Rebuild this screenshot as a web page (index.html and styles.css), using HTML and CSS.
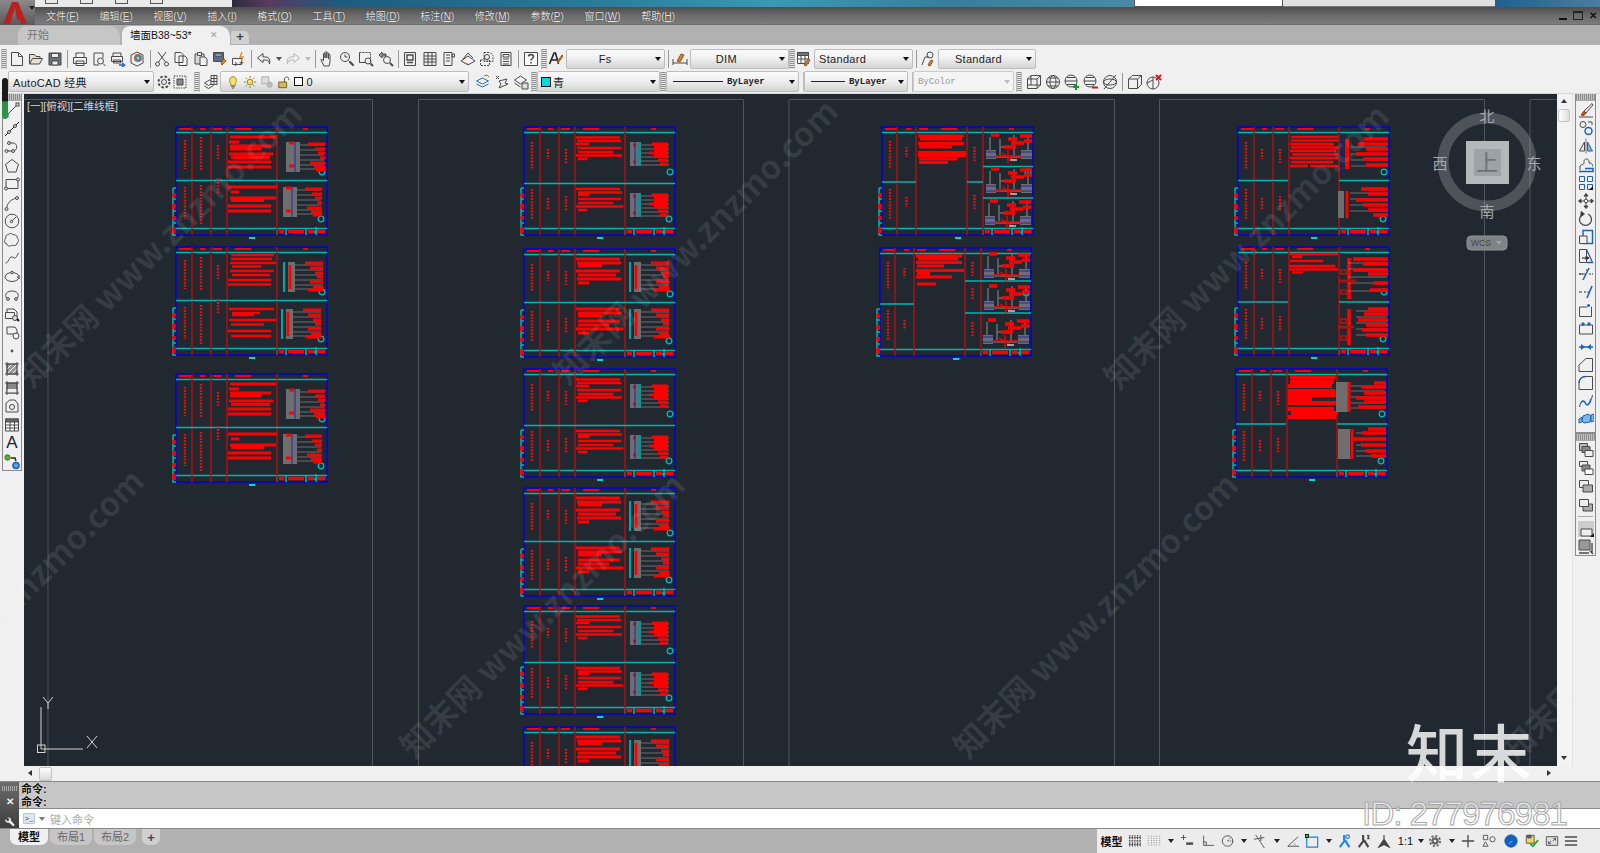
FILE: index.html
```html
<!DOCTYPE html>
<html lang="zh-CN">
<head>
<meta charset="utf-8">
<title>AutoCAD 经典</title>
<link rel="stylesheet" href="styles.css">
</head>
<body>
<svg class="defs" width="0" height="0">
<defs>
<symbol id="i-new" viewBox="0 0 16 16"><path d="M2.5 1.5h7l4 4v9h-11zM9.5 1.5v4h4"/></symbol>
<symbol id="i-open" viewBox="0 0 16 16"><path d="M1.5 13V3.5h5l1.5 2h4v2M1.5 13l3-5.5h10l-3 5.5z" fill="#e6e2d2"/></symbol>
<symbol id="i-save" viewBox="0 0 16 16"><path d="M2 2h12v12H2z" fill="#6d7178"/><path d="M4.500 2.500h7v4h-7zM5 10h6v4H5z" fill="#eee"/></symbol>
<symbol id="i-print" viewBox="0 0 16 16"><path d="M4 6V2h8v4M1.500 6.500h13v6h-13zM4 10h8v4.500H4z" fill="#f4f4f4"/></symbol>
<symbol id="i-prev" viewBox="0 0 16 16"><path d="M3 14V2h9v5M3 14h5"/><circle cx="9.500" cy="10" r="3"/><path d="M12 12.500l2.500 2.500"/></symbol>
<symbol id="i-pub" viewBox="0 0 16 16"><path d="M3 5V2h8v3M1.500 5.500h11v5h-11zM3.500 9h7v3h-7z"/><path d="M9 14h4M12 12l2.500 2-2.500 2" stroke="#1c62b8" stroke-width="1.600"/></symbol>
<symbol id="i-3d" viewBox="0 0 16 16"><path d="M8 1l6 3v8l-6 3-6-3V4z"/><circle cx="9" cy="7" r="3.800" fill="#2c7fd0" stroke="#d67a18"/><circle cx="9" cy="7" r="1.500" fill="#e8c24a" stroke="none"/></symbol>
<symbol id="i-cut" viewBox="0 0 16 16"><path d="M4 1l7.500 10M12 1L4.500 11"/><circle cx="3.500" cy="13" r="2"/><circle cx="12.500" cy="13" r="2"/></symbol>
<symbol id="i-copy" viewBox="0 0 16 16"><path d="M2 1.500h6l2 2v8H2zM6 5h6l2 2v7.500H6z" fill="#f4f4f4"/></symbol>
<symbol id="i-paste" viewBox="0 0 16 16"><path d="M2 3h9v10H2z" fill="#d9d9d9"/><path d="M4.500 1.500h4v3h-4zM7 6h5l2 2v6.500H7z" fill="#f4f4f4"/></symbol>
<symbol id="i-match" viewBox="0 0 16 16"><path d="M1.500 1.500h10v9h-10z" fill="#5b6b88"/><path d="M3 3h7v2H3z" fill="#ddd"/><path d="M9 12l3-4 2 2-4 4z" fill="#e2902a" stroke="#9c5a12"/></symbol>
<symbol id="i-blk" viewBox="0 0 16 16"><path d="M1.500 7.500h9v6h-9zM4 14.500a1.500 1.500 0 0 0 0-3M9 11a1.500 1.500 0 0 0 3 0"/><path d="M11 1l-2 5h3l-1.500 4" stroke="#e2902a" stroke-width="1.400"/></symbol>
<symbol id="i-undo" viewBox="0 0 16 16"><path d="M7 2.500L1.500 7 7 11.500V9h3c2 0 3 1 3.500 4 1-4-.5-7-3.500-7H7z"/></symbol>
<symbol id="i-redo" viewBox="0 0 16 16"><path d="M9 2.500L14.500 7 9 11.500V9H6c-2 0-3 1-3.500 4-1-4 .5-7 3.500-7h3z" stroke="#b9b9b9"/></symbol>
<symbol id="i-pan" viewBox="0 0 16 16"><path d="M4 15l-3-6c0-1.500 1.500-1 2.500 1V3c0-1.200 1.500-1.200 1.500 0v4-5.500c0-1.200 1.800-1.200 1.800 0V7V2.500c0-1.200 1.700-1.200 1.700 0V8V4c0-1.200 1.500-1.200 1.500 0v7l-1 4z"/></symbol>
<symbol id="i-zr" viewBox="0 0 16 16"><circle cx="6" cy="6" r="4.500"/><path d="M6 3.500V6h2.500M9.500 9.500l5 5" /><path d="M10.500 10.500l4 4" stroke-width="2.200"/></symbol>
<symbol id="i-zw" viewBox="0 0 16 16"><path d="M1.500 1.500h11v9" stroke-dasharray="2 1"/><path d="M1.500 1.500v10h6"/><circle cx="10" cy="10" r="3"/><path d="M12.500 12.500l2.500 2.500" stroke-width="2"/></symbol>
<symbol id="i-zp" viewBox="0 0 16 16"><path d="M1 4l3-3v2h4v2H4v2z" fill="#999"/><circle cx="9" cy="9" r="3.500"/><path d="M12 12l3 3" stroke-width="2"/></symbol>
<symbol id="i-prop" viewBox="0 0 16 16"><path d="M2.500 1.500h11v13h-11z"/><path d="M5 4h6v5H5zM5 11.500h6" stroke-width="1.400"/></symbol>
<symbol id="i-dc" viewBox="0 0 16 16"><path d="M2 1.500h12v13H2zM6 1.500v13M10 1.500v13M2 5h12M2 8h12M2 11h12"/></symbol>
<symbol id="i-pal" viewBox="0 0 16 16"><path d="M3 1.500h8v13H3zM11 3h2.500v3H11zM5 4h4M5 7h4M5 10h4"/></symbol>
<symbol id="i-sheet" viewBox="0 0 16 16"><path d="M1 10l7-5 7 5-7 4zM3 8l5-6 5 5"/><path d="M3 11l5 2" stroke="#c08a2a"/></symbol>
<symbol id="i-mark" viewBox="0 0 16 16"><path d="M5 1.500h6l3 3v6H5zM1.500 9h9v5.500h-9z" stroke-dasharray="2 1"/><circle cx="8" cy="6" r="2.500"/></symbol>
<symbol id="i-calc" viewBox="0 0 16 16"><path d="M3 1.500h10v13H3zM5 3.500h6V6H5zM5 8h6M5 10.500h6M5 13h6"/></symbol>
<symbol id="i-help" viewBox="0 0 16 16"><path d="M1.500 1.500h13v13h-13z" fill="#f8f8f8"/><path d="M5.500 5.500C5.500 3 10.500 3 10.500 5.500 10.500 7.500 8 7.500 8 9.500M8 11v1.500" stroke-width="1.600"/></symbol>
<symbol id="i-tstyle" viewBox="0 0 16 16"><path d="M1.500 13L6 2h1.500l3 11M3.500 9h5" stroke="#222" stroke-width="1.600"/><path d="M9 11l5-7 1 1-5 7z" fill="#d9822a" stroke="#8c5a20"/></symbol>
<symbol id="i-dstyle" viewBox="0 0 16 16"><path d="M1 14V8M15 14V8M1 12h14"/><path d="M5 10l4-7 3 1-4 7z" fill="#d9822a" stroke="#8c5a20"/></symbol>
<symbol id="i-tbstyle" viewBox="0 0 16 16"><path d="M1.500 1.500h11v11h-11z" fill="#fff"/><path d="M1.500 1.500h11v3h-11z" fill="#6d7178"/><path d="M1.500 8h11M5 4v8M9 4v8"/><path d="M8 14l4-6 2 1-4 6z" fill="#d9822a" stroke="#8c5a20"/></symbol>
<symbol id="i-mstyle" viewBox="0 0 16 16"><path d="M2 14l3-8h4"/><circle cx="10" cy="4" r="3"/><path d="M8 14l3-5 2 1-3 5z" fill="#d9822a" stroke="#8c5a20"/></symbol>
<symbol id="i-gear" viewBox="0 0 16 16"><circle cx="8" cy="8" r="2.500"/><circle cx="8" cy="8" r="5.500" stroke-dasharray="2.500 1.800" stroke-width="2"/></symbol>
<symbol id="i-wsp" viewBox="0 0 16 16"><path d="M2 2h12v12H2z" stroke-dasharray="1.500 1"/><path d="M5 5h6v6H5z" fill="#888"/></symbol>
<symbol id="i-layer" viewBox="0 0 16 16"><path d="M1.500 9l5-3 4 2.500-5 3zM1.500 12l4 2.500 5-3" /><path d="M8 1.500h6v9H8z" fill="#f4f4f4"/><path d="M8 4.500h6M8 7.500h6M11 1.500v9"/></symbol>
<symbol id="i-bulb" viewBox="0 0 16 16"><path d="M5.500 10C3 7 4 2 8 2s5 5 2.500 8v2h-5z" fill="#f4e46a" stroke="#8a7a20"/><path d="M6 13.500h4M7 15h2"/></symbol>
<symbol id="i-sun" viewBox="0 0 16 16"><circle cx="8" cy="8" r="3.200" fill="#f4e46a" stroke="#8a7a20"/><path d="M8 1v2.500M8 12.500V15M1 8h2.500M12.500 8H15M3 3l1.800 1.800M11.200 11.200L13 13M13 3l-1.800 1.800M4.800 11.200L3 13" stroke="#8a7a20"/></symbol>
<symbol id="i-frz" viewBox="0 0 16 16"><path d="M2 2h8v8H2z" fill="#ddd" stroke="#aaa"/><circle cx="11" cy="11" r="3" fill="#bbb" stroke="#aaa"/></symbol>
<symbol id="i-lock" viewBox="0 0 16 16"><path d="M2 8h9v6.500H2z" fill="#d9b650" stroke="#6a5a20"/><path d="M8.500 8V4.500c0-3 5-3 5 0V6"/></symbol>
<symbol id="i-lstate" viewBox="0 0 16 16"><path d="M1.500 7l6-3 6 3-6 3zM1.500 10l6 3 6-3" stroke="#2b6fb8"/><path d="M9 2l3-1 2 2" stroke="#8a7a20"/></symbol>
<symbol id="i-lwalk" viewBox="0 0 16 16"><path d="M2 2l3 3M2 5l3-3"/><path d="M5 7l8-2-2 4 3 1-9 4 2-4z"/></symbol>
<symbol id="i-lmatch" viewBox="0 0 16 16"><path d="M1.500 6l6-4 6 4-6 4z"/><path d="M1.500 9l6 4M9 9h6v6H9z" fill="#ddd"/></symbol>
<symbol id="i-box" viewBox="0 0 16 16"><path d="M1.500 5L5 1.500h9.500v9.500L11 14.500H1.500zM1.500 5H11v9.500M11 5l3.500-3.500M5 1.500V11H1.500M5 11h9.500"/></symbol>
<symbol id="i-sph" viewBox="0 0 16 16"><circle cx="8" cy="8" r="6.500"/><path d="M1.500 8h13M3 4h10M3 12h10"/><ellipse cx="8" cy="8" rx="3" ry="6.500"/></symbol>
<symbol id="i-sphp" viewBox="0 0 16 16"><circle cx="7" cy="7" r="6"/><path d="M1 7h12M3 3.500h8M3 10.500h8"/><path d="M12 10v6M9 13h6" stroke="#17962a" stroke-width="2"/></symbol>
<symbol id="i-sphm" viewBox="0 0 16 16"><circle cx="7" cy="7" r="6"/><path d="M1 7h12M3 3.500h8M3 10.500h8"/><path d="M9 13.500h6" stroke="#c01f1f" stroke-width="2"/></symbol>
<symbol id="i-sphn" viewBox="0 0 16 16"><circle cx="8" cy="8" r="6.500"/><ellipse cx="8" cy="8" rx="6.500" ry="3"/><path d="M2 15L14 1"/></symbol>
<symbol id="i-cube" viewBox="0 0 16 16"><path d="M1.500 5l4-3.500h9v9l-4 4h-9zM1.500 5h9v9.500M10.500 5l4-3.500"/></symbol>
<symbol id="i-cubex" viewBox="0 0 16 16"><circle cx="7" cy="9" r="6"/><path d="M7 3v12M1 9l6-3"/><path d="M10 1l5 5M15 1l-5 5" stroke="#d01818" stroke-width="1.800"/></symbol>
<symbol id="i-line" viewBox="0 0 16 16"><path d="M2.500 13.500l11-11"/><rect x="1" y="12" width="3" height="3" fill="#ddd"/><rect x="12" y="1" width="3" height="3" fill="#ddd"/></symbol>
<symbol id="i-xline" viewBox="0 0 16 16"><path d="M1 15L15 1" stroke="#222"/><circle cx="5" cy="11" r="1.500" fill="#ddd"/><circle cx="11" cy="5" r="1.500" fill="#ddd"/></symbol>
<symbol id="i-pline" viewBox="0 0 16 16"><path d="M3 12h6c5 0 5-8 0-8H5"/><circle cx="2.500" cy="12" r="1.500" fill="#ddd"/><circle cx="9" cy="12" r="1.500" fill="#ddd"/><circle cx="5" cy="4" r="1.500" fill="#ddd"/></symbol>
<symbol id="i-poly" viewBox="0 0 16 16"><path d="M8 1.500l6.500 5-2.500 7.500H4L1.500 6.500z"/></symbol>
<symbol id="i-rect" viewBox="0 0 16 16"><path d="M2 3.500h12v9H2z"/><circle cx="2" cy="12.500" r="1.500" fill="#ddd"/><circle cx="14" cy="3.500" r="1.500" fill="#ddd"/></symbol>
<symbol id="i-arc" viewBox="0 0 16 16"><path d="M2.500 14C3 8 7 4 13 3"/><circle cx="2.500" cy="14" r="1.500" fill="#ddd"/><circle cx="13" cy="3" r="1.500" fill="#ddd"/></symbol>
<symbol id="i-circ" viewBox="0 0 16 16"><circle cx="8" cy="8" r="6.800"/><path d="M7.500 8.500L12 4"/><circle cx="7.500" cy="8.500" r="1.200" fill="#ddd"/></symbol>
<symbol id="i-cloud" viewBox="0 0 16 16"><path d="M4 3c1-2 4-2 5 0 2-1 5 1 4 3 2 1 2 4 0 5 0 3-4 3-5 2-2 2-5 1-5-1-3 0-3-5-1-6-1-2 1-4 2-3z"/></symbol>
<symbol id="i-spl" viewBox="0 0 16 16"><path d="M1.500 13C5 13 5 6 8 7s3 3 6.500-4"/></symbol>
<symbol id="i-ell" viewBox="0 0 16 16"><ellipse cx="8" cy="8" rx="7" ry="4.500"/><circle cx="8" cy="3.500" r="1.300" fill="#ddd"/><circle cx="15" cy="8" r="1.300" fill="#ddd"/></symbol>
<symbol id="i-earc" viewBox="0 0 16 16"><path d="M4 12C0 10 1 4 8 4s8 6 4 8"/><circle cx="4" cy="12" r="1.400" fill="#ddd"/><circle cx="12" cy="12" r="1.400" fill="#ddd"/></symbol>
<symbol id="i-ins" viewBox="0 0 16 16"><path d="M3 11V3h7l3 3v5"/><path d="M1.500 6.500h9v6h-9z" fill="#eee"/><circle cx="11" cy="12" r="2.500" fill="#ddd"/><path d="M13 13l2 2" stroke="#111" stroke-width="2"/></symbol>
<symbol id="i-block" viewBox="0 0 16 16"><path d="M3 3h8l2 3v4H3z"/><circle cx="12" cy="12" r="3" fill="#f0f0f0"/></symbol>
<symbol id="i-pt" viewBox="0 0 16 16"><circle cx="8" cy="8" r="1.400" fill="#555" stroke="none"/></symbol>
<symbol id="i-hatch" viewBox="0 0 16 16"><path d="M3 3h10v10H3z" fill="#999"/><path d="M3 8l5-5M3 13L13 3M8 13l5-5" stroke="#eee"/><path d="M1 3h14M3 1v14M1 13h14M13 1v14"/></symbol>
<symbol id="i-grad" viewBox="0 0 16 16"><path d="M3 3h10v10H3z" fill="#888"/><path d="M3 9h10v4H3z" fill="#eee" stroke="none"/><path d="M1 3h14M3 1v14M1 13h14M13 1v14"/></symbol>
<symbol id="i-reg" viewBox="0 0 16 16"><path d="M2 5l4-3h5l3 4v8H2z"/><circle cx="8" cy="9" r="2.500"/></symbol>
<symbol id="i-tbl" viewBox="0 0 16 16"><path d="M1.500 2h13v12h-13z" fill="#fff"/><path d="M1.500 2h13v3h-13z" fill="#666"/><path d="M1.500 8h13M1.500 11h13M6 5v9M10.500 5v9"/></symbol>
<symbol id="i-addsel" viewBox="0 0 16 16"><circle cx="3.500" cy="3.500" r="2.700" fill="#64a83c" stroke="#3e7a20"/><path d="M7 4h4l1 3" stroke="#222" stroke-width="1.400"/><circle cx="12" cy="11.500" r="3" fill="#5aa4e0" stroke="#1c62b8" stroke-width="1.600"/></symbol>
<symbol id="i-erase" viewBox="0 0 16 16"><path d="M14 1.500L6 9l2 2 7-8z" fill="#e8e8e8"/><path d="M6 9l-3 4 3 .5 2-2.500z" fill="#c8541c" stroke="#8c3a14"/><path d="M1 15h14"/></symbol>
<symbol id="i-cpy" viewBox="0 0 16 16"><circle cx="5" cy="4.500" r="3"/><circle cx="10.500" cy="11" r="3.500" stroke="#1c62b8" stroke-width="1.500"/><path d="M10 2h4v3" /></symbol>
<symbol id="i-mir" viewBox="0 0 16 16"><path d="M8 .5v15" stroke="#777"/><path d="M6.500 4v9h-5z"/><path d="M9.500 4v9h5z" fill="#7db6e8" stroke="#1c62b8"/></symbol>
<symbol id="i-off" viewBox="0 0 16 16"><path d="M2 13V10c0-1.500 1-2.500 2.500-2.500S6 6 6 4.500C6 3 7 2 8.500 2s2.500 1 2.500 2.500v1.500c2 0 3.500 1 3.500 2.500v1" /><path d="M1 14.500h14v-3H7" stroke="#1c62b8" stroke-width="1.500"/></symbol>
<symbol id="i-arr" viewBox="0 0 16 16"><path d="M1.500 1.500h5v5h-5zM1.500 9.500h5v5h-5z" stroke="#1c62b8"/><path d="M9.500 1.500h5v5h-5zM9.500 9.500h5v5h-5z" stroke="#1c62b8"/><path d="M11 15l4-4v4z" fill="#111" stroke="none"/></symbol>
<symbol id="i-mov" viewBox="0 0 16 16"><path d="M8 1v14M1 8h14"/><path d="M6 3l2-2.500L10 3zM6 13l2 2.500 2-2.500zM3 6L.5 8 3 10zM13 6l2.500 2L13 10z" fill="#333"/><circle cx="8" cy="8" r="1.800" fill="#fff"/></symbol>
<symbol id="i-rot" viewBox="0 0 16 16"><path d="M10 3a6 6 0 1 1-5 0" stroke-width="1.300"/><path d="M3 .5l3.500 2.500L3 5.500z" fill="#333"/></symbol>
<symbol id="i-scl" viewBox="0 0 16 16"><path d="M5 1.500h9.500v13H5z" stroke="#1c62b8" stroke-width="1.400"/><path d="M1.500 7h7.500v7.500H1.500z" fill="#f0f0f0"/></symbol>
<symbol id="i-str" viewBox="0 0 16 16"><path d="M1.500 1.500h7v13h-7z"/><path d="M8.500 1.500l6 13h-6" stroke="#1c62b8" stroke-width="1.300"/><path d="M4 10h6" stroke="#111"/><path d="M8 8l3 2-3 2z" fill="#111"/></symbol>
<symbol id="i-trim" viewBox="0 0 16 16"><path d="M1 8h4M8 4h1M11 8h4" stroke="#333" stroke-dasharray="2 1"/><path d="M11 2L5 14" stroke="#1c62b8" stroke-width="1.600"/><path d="M1 8h6"/></symbol>
<symbol id="i-ext" viewBox="0 0 16 16"><path d="M1 8h3M6 8h2M9.500 8H12" stroke="#333"/><path d="M14 2L9 14" stroke="#1c62b8" stroke-width="1.600"/></symbol>
<symbol id="i-brk" viewBox="0 0 16 16"><path d="M1.500 14.500V5h12v9.500H1.500z"/><path d="M9 5h4" stroke="#f0f0f0" stroke-width="2"/><circle cx="10.500" cy="3.500" r="1.500" fill="#1c62b8" stroke="none"/></symbol>
<symbol id="i-brkp" viewBox="0 0 16 16"><path d="M1.500 5h13v9h-13z"/><circle cx="5" cy="4" r="1.700" fill="#1c62b8" stroke="none"/><circle cx="11" cy="4" r="1.700" fill="#1c62b8" stroke="none"/></symbol>
<symbol id="i-join" viewBox="0 0 16 16"><path d="M1 8h14" stroke="#1c62b8" stroke-width="1.500"/><path d="M3 5l4 3-4 3zM13 5L9 8l4 3z" fill="#1c62b8" stroke="none"/></symbol>
<symbol id="i-chm" viewBox="0 0 16 16"><path d="M1 8L8 1.500h6.500v13H1z"/></symbol>
<symbol id="i-fil" viewBox="0 0 16 16"><path d="M1 14.500V8c0-4 3-6.500 7-6.500h6.500v13z"/><path d="M1 8c0-4 3-6.500 7-6.500" stroke="#1c62b8" stroke-width="1.500"/></symbol>
<symbol id="i-bld" viewBox="0 0 16 16"><path d="M1.500 14l1-4M14.500 2l-1 4"/><path d="M3 10c2-4 4-1 5 1s4 0 5-5" stroke="#1c62b8" stroke-width="1.600"/></symbol>
<symbol id="i-exp" viewBox="0 0 16 16"><path d="M5 5l5-2 3 2-1 6-6 1-2-2z" fill="#7db6e8" stroke="#1c62b8"/><path d="M1 8l3-2v5l-3 1zM13 4l3-1v7l-3 1z" fill="#7db6e8" stroke="#1c62b8"/></symbol>
<symbol id="i-do1" viewBox="0 0 16 16"><path d="M1.500 1.500h8v7h-8z" fill="#bbb"/><path d="M4 4.500h8v6H4z" fill="#888"/><path d="M7 8.500h8v6H7z" fill="#eee"/></symbol>
<symbol id="i-do2" viewBox="0 0 16 16"><path d="M1.500 1.500h8v5h-8z" fill="#eee"/><path d="M4 5h8v6H4z" fill="#888"/><path d="M7 9h8v5.500H7z" fill="#fff"/></symbol>
<symbol id="i-do3" viewBox="0 0 16 16"><path d="M1.500 2.500h9v7h-9z" fill="#eee"/><path d="M5 7h9.500v7H5z" fill="#aaa"/></symbol>
<symbol id="i-do4" viewBox="0 0 16 16"><path d="M5 7h9.500v7H5z" fill="#aaa"/><path d="M1.500 2.500h9v7h-9z" fill="#eee"/></symbol>
<symbol id="i-txtf" viewBox="0 0 16 16"><path d="M0 0h16v16H0z" fill="#ccc" stroke="none"/><path d="M3 8h11v7H3z" fill="#eee"/><path d="M12 16l4-4v4z" fill="#111" stroke="none"/></symbol>
<symbol id="i-dimf" viewBox="0 0 16 16"><path d="M1 1h11v10H1z" fill="#999"/><path d="M1 14h10M14 4v10M12 12l3 3" stroke-width="1.400"/></symbol>
<symbol id="i-grid" viewBox="0 0 16 16"><path d="M2 1v14M5 1v14M8 1v14M11 1v14M14 1v14M1 4h14M1 8h14M1 12h14" stroke-width="1.200" stroke-dasharray="2 .8"/></symbol>
<symbol id="i-snap" viewBox="0 0 16 16"><path d="M1.500 2v12M5 2v12M8 2v12M11 2v12M14.500 2v12" stroke-dasharray="1 1.500" stroke="#777"/></symbol>
<symbol id="i-dyn" viewBox="0 0 16 16"><path d="M4 1v6M1 4h6"/><path d="M7 11h8" stroke-width="2.800"/></symbol>
<symbol id="i-ort" viewBox="0 0 16 16"><path d="M3 2v11h12M3 9h3v4"/></symbol>
<symbol id="i-pol" viewBox="0 0 16 16"><circle cx="7.500" cy="8" r="6"/><path d="M7.500 8H14M7.500 8l3.500-4" stroke-dasharray="1.500 1"/></symbol>
<symbol id="i-iso" viewBox="0 0 16 16"><path d="M3 1l10 15M9 1v7M1 6l12-2" /></symbol>
<symbol id="i-ang" viewBox="0 0 16 16"><path d="M14 3L2 14h13"/><path d="M9 10.500c1 .5 1.500 2 1.500 3.500" stroke-dasharray="1 1"/></symbol>
<symbol id="i-osnap" viewBox="0 0 16 16"><path d="M2 3.500h12.500V15H2z" stroke="#1c7fe0" stroke-width="1.300"/><rect x="0" y="0" width="4.500" height="4.500" fill="#111" stroke="none"/><rect x="1" y="1" width="2.500" height="2.500" fill="#24d024" stroke="none"/></symbol>
<symbol id="i-an1" viewBox="0 0 16 16"><path d="M8 7L2 15M8 7l5 8M7 1v6" stroke="#1a86f0" stroke-width="2.400"/><circle cx="11" cy="3" r="2" stroke="#1a86f0" stroke-width="1.400"/></symbol>
<symbol id="i-an2" viewBox="0 0 16 16"><path d="M8 7L2 15M8 7l5 8M7 1v6" stroke="#444" stroke-width="2.400"/><path d="M12 1l2 5M14 1l-2 5" stroke="#444" stroke-width="1.300"/></symbol>
<symbol id="i-an3" viewBox="0 0 16 16"><path d="M8 6L2 15l6-3 6 3zM8 1v6" fill="#444" stroke="#444" stroke-width="1.300"/></symbol>
<symbol id="i-cog" viewBox="0 0 16 16"><circle cx="8" cy="8" r="3.800" fill="#666" stroke="#666"/><circle cx="8" cy="8" r="5.800" stroke="#666" stroke-width="2.200" stroke-dasharray="2.400 2.100"/><circle cx="8" cy="8" r="1.500" fill="#eee" stroke="none"/></symbol>
<symbol id="i-plus" viewBox="0 0 16 16"><path d="M8 1v14M1 8h14" stroke-width="1.500"/></symbol>
<symbol id="i-iso2" viewBox="0 0 16 16"><path d="M1.500 1.500h5v5h-5zM1 14l3-5 3 5z"/><circle cx="12" cy="6" r="3"/></symbol>
<symbol id="i-hw" viewBox="0 0 16 16"><circle cx="8" cy="8" r="7" fill="#0f62c4" stroke="#0a4a9a"/><path d="M5.500 11l4-3" stroke="#9cc8f4"/></symbol>
<symbol id="i-iso3" viewBox="0 0 16 16"><path d="M1.500 1.500h9v9h-9z" fill="#efd85c"/><path d="M3 1.500h4v3H3z" fill="#4a6a9a"/><path d="M6 11l3 3 6-7" stroke="#28a028" stroke-width="2"/></symbol>
<symbol id="i-full" viewBox="0 0 16 16"><path d="M1.500 3h13v10h-13z" fill="#ddd"/><path d="M4 11l3-3M4 8.500V11h2.500M12 5L9 8M9.500 5H12v2.500"/></symbol>
<symbol id="i-menu" viewBox="0 0 16 16"><path d="M1 3.500h14M1 8h14M1 12.500h14" stroke-width="1.600"/></symbol>
<g id="fr">
<rect x="0" y="0" width="151" height="108" class="bl"/>
<path class="cy" d="M0 5.500H151M0 101.500H151"/>
<path class="cy" d="M-3 61H0M-3 61V108H0M-3 72H0M-3 84H0M-3 96H0"/>
<path class="cy" d="M101 101V108M110 101V108M130 101V108M140 100V108M136 105H146"/>
<path class="rd" stroke-width="2.200" d="M3 2H15M24 2H29M37 2H46M59 2H75M127 2H132"/>
<path class="rd" stroke-width="3.500" d="M-2 66V70M-2 77V82M-2 89V93M-2 100V106"/>
<path class="rd" stroke-width="3.500" d="M103 104.500H108M112 104.500H128M132 104.500H138M141 104.500H149"/>
<rect x="73" y="110" width="6" height="2" class="cf"/>
<circle cx="146" cy="45" r="2.800" class="cc"/><circle cx="145" cy="92" r="2.800" class="cc"/>
</g>
<path id="cols" class="dr" d="M16 0V108M35 0V108M51 0V108M101 0V108"/>
<path id="mid" class="cy" d="M0 53.500H151"/>
<path id="mid56" class="cy" d="M0 56.500H151"/>
<g id="d1"><rect x="0" y="0" width="14" height="30" class="ha"/><path class="gl" d="M14 3H38M14 8H38M14 13H38M14 18H38M14 23H38M14 27H38"/><path class="rd" stroke-width="2.800" d="M3 1H8M3 24H8M22 2H39M29 7H39M32 11H39M34 16H39M24 21H39M28 25H39M30 28H39"/><path class="bg" d="M9 0V30"/></g>
<g id="d2"><rect x="5" y="0" width="7" height="30" class="ha"/><path class="cy wide" d="M1 0V30"/><path class="gl" d="M12 3H40M12 8H40M12 13H40M12 18H40M12 23H40M12 27H40"/><path class="rd" stroke-width="2.800" d="M7 3V27M22 1H40M27 6H40M32 11H40M34 15H40M27 20H40M30 25H40M25 28H40"/></g>
<g id="d3"><rect x="0" y="0" width="10" height="24" class="ha"/><rect x="7" y="0" width="4" height="24" class="tl"/><path class="gl" d="M11 3H39M11 7H39M11 11H39M11 15H39M11 19H39M11 23H39"/><path class="rd" stroke-width="3" d="M3 3H6M3 20H6M22 2H38M24 5H38M24 8H38M19 11H38M24 14H38M28 18H38M30 22H38"/><path class="bg" d="M5 0V24"/></g>
<g id="d5"><path class="gl2" d="M6 4V24M16 6V22M30 2V24M44 4V26M6 24H46M16 14H30"/><rect x="2" y="17" width="10" height="9" class="ha"/><rect x="37" y="17" width="11" height="9" class="ha"/><path class="bg" d="M2 19H12M2 24H12M37 19H48M37 24H48"/><path class="rd" stroke-width="3.600" d="M7 2H15M24 6H33M27 10H40M20 14H32M36 3H48M40 8H48"/><path class="rd" stroke-width="1.300" d="M12 23H37M24 17V30M18 20L31 28"/><path class="wh" d="M26 27H33"/></g>
<path id="dotsA" class="dots" d="M9 13V42M25 10V43M42 18V32M9 60V92M25 58V98M42 52V66"/>
<path id="dotsD" class="dots" d="M8 15V43M24 22V32M42 22V36M8 62V92M24 71V83M42 69V84"/>
<g id="sA"><use href="#fr"/><use href="#cols"/><use href="#mid"/><use href="#dotsA"/>
<path class="rd" stroke-width="3" d="M54 10H100M53 15H63M54 19H95M54 22H85M53 27H97M55 30.500H94M52 35H95M52 40H95M52 60H101M55 65H63M54 71H100M55 73.500H88M52 79H95M52 84H95"/>
<use href="#d1" x="110" y="15"/><use href="#d1" x="107" y="60"/></g>
<g id="sB"><use href="#fr"/><use href="#cols"/><use href="#mid"/><use href="#dotsA"/>
<path class="rd" stroke-width="2.400" d="M55 8H98M55 12H96M54 16H100M56 19.500H85M54 24H98M56 28H94M52 33H95M52 37.500H95M53 62H98M56 66H84M56 68H78M53 73H100M55 77.500H88M52 84H95M55 89H95"/>
<use href="#d2" x="107" y="15"/><use href="#d2" x="105" y="62"/></g>
<g id="sD"><use href="#fr"/><use href="#cols"/><use href="#mid56"/><use href="#dotsD"/>
<path class="rd" stroke-width="2.600" d="M52 10.500H96M53 14H97M52 17H65M53 21H97M54 25H89M52 28.500H98M54 32H63M52 62H96M54 65.500H98M54 68H65M54 72H97M54 76H89M52 79.500H99M54 83H63"/>
<use href="#d3" x="106" y="15"/><use href="#d3" x="106" y="66"/></g>
<g id="sD2"><use href="#fr"/><use href="#cols"/><use href="#mid"/><use href="#dotsD"/>
<path class="rd" stroke-width="3" d="M52 10H96M53 14H97M54 17H78M52 22H96M54 26H92M53 30H97M54 34H65M52 60H96M54 64H98M54 67H78M54 72H96M54 76H85M52 80H99M54 84H65"/>
<use href="#d2" x="105" y="13"/><use href="#d2" x="105" y="60"/></g>
<g id="sE"><use href="#fr"/><path class="dr" d="M15 0V108M34 0V108M85 0V108M101 0V108"/><path class="cy" d="M0 55H34M85 55H101M101 39.500H151M101 71H151"/>
<path class="dots" d="M8 14V42M24.500 20V30M92.500 20V34M8 62V92M24.500 70V80M92.500 68V82"/>
<path class="rd" stroke-width="3" d="M36 9H82M38 12H80M36 16.500H82M37 20H70M36 25.500H84M36 28.500H84M37 32H75M37 35.500H66"/>
<use href="#d5" x="102" y="6"/><use href="#d5" x="102" y="40"/><use href="#d5" x="101" y="72"/></g>
<g id="sE2"><use href="#fr"/><path class="dr" d="M15 0V108M34 0V108M85 0V108M101 0V108"/><path class="cy" d="M0 56H34M85 33H151M85 65H151"/>
<path class="dots" d="M8 14V42M24.500 20V30M92.500 14V28M8 62V92M24.500 72V82M92.500 40V52M92.500 74V88"/>
<path class="rd" stroke-width="3" d="M36 8H82M38 11H78M36 14.500H82M37 18H64M36 22.500H84M37 25.500H50M36 29H72M37 36H56"/>
<use href="#d5" x="102" y="4"/><use href="#d5" x="102" y="36"/><use href="#d5" x="101" y="70"/></g>
<g id="sF"><use href="#fr"/><use href="#cols"/><path class="cy" d="M0 53.500H50M101 53.500H151"/><use href="#dotsD"/>
<path class="rd" stroke-width="2.400" d="M53 10H100M53 13.500H100M52 17H96M53 20.500H100M52 24H98M54 27.500H100M52 31H100M53 35H95M52 39H70M72 39H100"/>
<path class="rd" stroke-width="4" d="M109 12V42"/><path class="bg" d="M105 9V48"/>
<path class="gl" d="M113 20H149M113 27H149M113 33H149M113 39H149M112 66H149M112 72H149M112 78H149M112 84H149"/>
<path class="rd" stroke-width="3.500" d="M126 12H150M120 17H150M128 22H150M118 27H150M125 32H150M128 38H150M123 62H150M130 67H150M118 73H150M125 78H150M130 83H150M135 88H150"/>
<rect x="100" y="64" width="6" height="27" class="ha"/><path class="rd" stroke-width="3" d="M109 64V91"/></g>
<g id="sF2"><use href="#fr"/><use href="#cols"/><path class="cy" d="M0 55H50M101 55H151"/><use href="#dotsD"/>
<path class="rd" stroke-width="2.400" d="M51 7H100M54 10H64M52 14H85M51 19H97M51 22.500H100M54 25.500H65"/>
<path class="rd" stroke-width="3.500" d="M111 11V52M111 62V98"/>
<path class="gl" d="M110 16H149M110 22H149M110 30H149M110 36H149M110 44H149M118 64H149M118 70H149M118 76H149M118 82H149M118 88H149"/>
<path class="dk" d="M100 34H118M100 80H116"/>
<path class="bxr" d="M103 23H108V27H103zM103 43H108V47H103zM103 72H108V76H103zM103 89H108V93H103z"/>
<path class="rd" stroke-width="3.500" d="M115 12H150M125 17H150M115 23H150M130 27H150M135 36H150M132 43H150M130 62H150M126 67H150M120 73H150M128 78H150M124 83H150M128 88H150"/></g>
<g id="sF3"><use href="#fr"/><use href="#cols"/><path class="cy" d="M0 55H50M101 55H151"/><use href="#dotsD"/>
<path class="rd" stroke-width="4" d="M54 8H99M54 13H98M52 17H96M52 22H99M52 26H100M52 30H76M52 34H100M52 40H98M55 44H102M52 48H100"/>
<rect x="100" y="13" width="12" height="30" class="ha"/><rect x="102" y="60" width="12" height="30" class="ha"/>
<path class="rd" stroke-width="3" d="M113 13V43M116 60V90"/>
<path class="gl" d="M115 17H149M115 22H149M115 28H149M115 34H149M115 39H149M120 64H149M120 70H149M120 76H149M120 82H149M120 87H149"/>
<path class="rd" stroke-width="3.500" d="M138 14H150M125 18H150M128 24H150M120 29H150M128 33H150M122 38H150M132 60H150M126 64H150M118 70H150M125 76H150M130 82H150M135 87H150"/></g>
</defs>
</svg>

<div class="app">
<header class="topstrip">
<div class="qa"><span class="qa-b"></span><span class="qa-b"></span><span class="qa-b"></span><span class="qa-b"></span></div>
<div class="photo"></div>
<div class="whitebox"></div>
<div class="graybox"></div>
<div class="photo2"></div>
</header>
<nav class="menubar">
<span class="mi">文件(<u>F</u>)</span><span class="mi">编辑(<u>E</u>)</span><span class="mi">视图(<u>V</u>)</span><span class="mi">插入(<u>I</u>)</span><span class="mi">格式(<u>O</u>)</span><span class="mi">工具(<u>T</u>)</span><span class="mi">绘图(<u>D</u>)</span><span class="mi">标注(<u>N</u>)</span><span class="mi">修改(<u>M</u>)</span><span class="mi">参数(<u>P</u>)</span><span class="mi">窗口(<u>W</u>)</span><span class="mi">帮助(<u>H</u>)</span>
<div class="winctl"><span class="wc-min"></span><span class="wc-max"></span><span class="wc-x">✕</span></div>
</nav>
<div class="tabbar">
<div class="ftab">开始</div>
<div class="ftab active"><span>墙面B38~53*</span><span class="tabx">✕</span></div>
<div class="fplus">+</div>
</div>

<section class="toolbars">
<div class="row r1">
<i class="grip"></i>
<b class="btn"><svg class="ic"><use href="#i-new"/></svg></b><b class="btn"><svg class="ic"><use href="#i-open"/></svg></b><b class="btn"><svg class="ic"><use href="#i-save"/></svg></b><i class="sep"></i>
<b class="btn"><svg class="ic"><use href="#i-print"/></svg></b><b class="btn"><svg class="ic"><use href="#i-prev"/></svg></b><b class="btn"><svg class="ic"><use href="#i-pub"/></svg></b><b class="btn"><svg class="ic"><use href="#i-3d"/></svg></b><i class="sep"></i>
<b class="btn"><svg class="ic"><use href="#i-cut"/></svg></b><b class="btn"><svg class="ic"><use href="#i-copy"/></svg></b><b class="btn"><svg class="ic"><use href="#i-paste"/></svg></b><b class="btn"><svg class="ic"><use href="#i-match"/></svg></b><b class="btn"><svg class="ic"><use href="#i-blk"/></svg></b><i class="sep"></i>
<b class="btn"><svg class="ic"><use href="#i-undo"/></svg></b><i class="arr"></i><b class="btn"><svg class="ic"><use href="#i-redo"/></svg></b><i class="arr lt"></i><i class="sep"></i>
<b class="btn"><svg class="ic"><use href="#i-pan"/></svg></b><b class="btn"><svg class="ic"><use href="#i-zr"/></svg></b><b class="btn"><svg class="ic"><use href="#i-zw"/></svg></b><b class="btn"><svg class="ic"><use href="#i-zp"/></svg></b><i class="sep"></i>
<b class="btn"><svg class="ic"><use href="#i-prop"/></svg></b><b class="btn"><svg class="ic"><use href="#i-dc"/></svg></b><b class="btn"><svg class="ic"><use href="#i-pal"/></svg></b><b class="btn"><svg class="ic"><use href="#i-sheet"/></svg></b><b class="btn"><svg class="ic"><use href="#i-mark"/></svg></b><b class="btn"><svg class="ic"><use href="#i-calc"/></svg></b><i class="sep"></i>
<b class="btn"><svg class="ic"><use href="#i-help"/></svg></b>
<i class="grip"></i><b class="btn"><svg class="ic"><use href="#i-tstyle"/></svg></b>
<div class="dd w-fs"><span class="dd-t c">Fs</span><i class="arr dk"></i></div>
<i class="sep"></i><b class="btn"><svg class="ic"><use href="#i-dstyle"/></svg></b>
<div class="dd w-dim"><span class="dd-t c">DIM</span><i class="arr dk"></i></div>
<i class="grip"></i><b class="btn"><svg class="ic"><use href="#i-tbstyle"/></svg></b>
<div class="dd w-std"><span class="dd-t">Standard</span><i class="arr dk"></i></div>
<i class="sep"></i><b class="btn"><svg class="ic"><use href="#i-mstyle"/></svg></b>
<div class="dd w-std2"><span class="dd-t c">Standard</span><i class="arr dk"></i></div>
</div>
<div class="row r2">
<div class="dd w-ws"><span class="dd-t">AutoCAD 经典</span><i class="arr dk"></i></div>
<b class="btn"><svg class="ic"><use href="#i-gear"/></svg></b><b class="btn nar"><svg class="ic"><use href="#i-wsp"/></svg></b>
<i class="grip gl2"></i><b class="btn"><svg class="ic"><use href="#i-layer"/></svg></b>
<div class="dd w-layer"><svg class="ic sm"><use href="#i-bulb"/></svg><svg class="ic sm"><use href="#i-sun"/></svg><svg class="ic sm"><use href="#i-frz"/></svg><svg class="ic sm"><use href="#i-lock"/></svg><i class="swatch"></i><span class="dd-t ln">0</span><i class="arr dk"></i></div>
<b class="btn"><svg class="ic"><use href="#i-lstate"/></svg></b><b class="btn"><svg class="ic"><use href="#i-lwalk"/></svg></b><b class="btn"><svg class="ic"><use href="#i-lmatch"/></svg></b>
<i class="grip z"></i>
<div class="dd w-col"><i class="swatch cyan"></i><span class="dd-t zh">青</span><i class="arr dk"></i></div>
<i class="grip z"></i>
<div class="dd w-lt"><i class="ltline"></i><span class="dd-t mono">ByLayer</span><i class="arr dk"></i></div>
<i class="grip z nr"></i>
<div class="dd w-lw"><i class="ltline sh"></i><span class="dd-t mono">ByLayer</span><i class="arr dk"></i></div>
<i class="grip z nr"></i>
<div class="dd w-pc off"><span class="dd-t mono gray">ByColor</span><i class="arr lt"></i></div>
<i class="grip g3"></i>
<b class="btn"><svg class="ic"><use href="#i-box"/></svg></b><b class="btn"><svg class="ic"><use href="#i-sph"/></svg></b><b class="btn"><svg class="ic"><use href="#i-sphp"/></svg></b><b class="btn"><svg class="ic"><use href="#i-sphm"/></svg></b><b class="btn"><svg class="ic"><use href="#i-sphn"/></svg></b><i class="sep"></i>
<b class="btn"><svg class="ic"><use href="#i-cube"/></svg></b><b class="btn"><svg class="ic"><use href="#i-cubex"/></svg></b>
</div>
</section>

<main class="work">
<aside class="ltool">
<div class="lbar">
<i class="vgrip"></i>
<b class="vb"><svg class="ic"><use href="#i-line"/></svg></b><b class="vb"><svg class="ic"><use href="#i-xline"/></svg></b><b class="vb"><svg class="ic"><use href="#i-pline"/></svg></b><b class="vb"><svg class="ic"><use href="#i-poly"/></svg></b><b class="vb"><svg class="ic"><use href="#i-rect"/></svg></b><b class="vb"><svg class="ic"><use href="#i-arc"/></svg></b><b class="vb"><svg class="ic"><use href="#i-circ"/></svg></b><b class="vb"><svg class="ic"><use href="#i-cloud"/></svg></b><b class="vb"><svg class="ic"><use href="#i-spl"/></svg></b><b class="vb"><svg class="ic"><use href="#i-ell"/></svg></b><b class="vb"><svg class="ic"><use href="#i-earc"/></svg></b><b class="vb"><svg class="ic"><use href="#i-ins"/></svg></b><b class="vb"><svg class="ic"><use href="#i-block"/></svg></b><b class="vb"><svg class="ic"><use href="#i-pt"/></svg></b><b class="vb"><svg class="ic"><use href="#i-hatch"/></svg></b><b class="vb"><svg class="ic"><use href="#i-grad"/></svg></b><b class="vb"><svg class="ic"><use href="#i-reg"/></svg></b><b class="vb"><svg class="ic"><use href="#i-tbl"/></svg></b><b class="vb a-glyph">A</b><b class="vb"><svg class="ic"><use href="#i-addsel"/></svg></b>
</div>
</aside>
<div class="view">
<svg class="draw" viewBox="24 94 1533 672" width="1533" height="672">
<path class="frame" d="M24 99.500H372.500V766M48 99.500V766M418.500 766V99.500H743.500V766M789 766V99.500H1114.500V766M1159.500 766V99.500H1484.500V766M1530 766V99.500H1557"/>
<use href="#sA" x="176" y="127"/><use href="#sB" x="176" y="247"/><use href="#sA" x="176" y="374"/>
<use href="#sD" x="524" y="127"/><use href="#sD2" x="524" y="249"/><use href="#sD" x="524" y="369"/><use href="#sD2" x="524" y="488"/><use href="#sD" x="524" y="606"/><use href="#sD2" x="524" y="727"/>
<use href="#sE" x="882" y="127"/><use href="#sE2" x="880" y="248"/>
<use href="#sF" x="1238" y="127"/><use href="#sF2" x="1238" y="247"/><use href="#sF3" x="1236" y="369"/>
<g class="ucs"><path d="M41 707V749H83M87 736L97 748M97 736L87 748M43 697L48 703L53 697M48 703V709"/><rect x="37.500" y="745" width="7.500" height="7.500"/></g>
<g class="cube">
<circle cx="1487" cy="162" r="44" class="ring"/>
<rect x="1466" y="141" width="43" height="43" class="face"/>
<rect x="1474" y="149" width="27" height="27" class="facein"/>
<text x="1487" y="170" class="top">上</text>
<text x="1487" y="122" class="dir">北</text><text x="1487" y="217" class="dir">南</text><text x="1440" y="169" class="dir">西</text><text x="1534" y="169" class="dir">东</text>
<rect x="1467" y="236" width="40" height="14" rx="4" class="wcs"/><text x="1481" y="246" class="wcst">WCS</text><path class="wcsa" d="M1496 241h6l-3 4z"/>
</g>
</svg>
<div class="vplabel">[一][俯视][二维线框]</div>
</div>
<aside class="rside">
<div class="vscroll"><i class="sa up"></i><i class="thumb"></i><i class="sa dn"></i></div>
<div class="rtool">
<div class="rbar">
<i class="vgrip"></i>
<b class="vb"><svg class="ic"><use href="#i-erase"/></svg></b><b class="vb"><svg class="ic"><use href="#i-cpy"/></svg></b><b class="vb"><svg class="ic"><use href="#i-mir"/></svg></b><b class="vb"><svg class="ic"><use href="#i-off"/></svg></b><b class="vb"><svg class="ic"><use href="#i-arr"/></svg></b><b class="vb"><svg class="ic"><use href="#i-mov"/></svg></b><b class="vb"><svg class="ic"><use href="#i-rot"/></svg></b><b class="vb"><svg class="ic"><use href="#i-scl"/></svg></b><b class="vb"><svg class="ic"><use href="#i-str"/></svg></b><b class="vb"><svg class="ic"><use href="#i-trim"/></svg></b><b class="vb"><svg class="ic"><use href="#i-ext"/></svg></b><b class="vb"><svg class="ic"><use href="#i-brk"/></svg></b><b class="vb"><svg class="ic"><use href="#i-brkp"/></svg></b><b class="vb"><svg class="ic"><use href="#i-join"/></svg></b><b class="vb"><svg class="ic"><use href="#i-chm"/></svg></b><b class="vb"><svg class="ic"><use href="#i-fil"/></svg></b><b class="vb"><svg class="ic"><use href="#i-bld"/></svg></b><b class="vb"><svg class="ic"><use href="#i-exp"/></svg></b>
</div>
<div class="rbar second">
<i class="vgrip"></i>
<b class="vb"><svg class="ic"><use href="#i-do1"/></svg></b><b class="vb"><svg class="ic"><use href="#i-do2"/></svg></b><b class="vb"><svg class="ic"><use href="#i-do3"/></svg></b><b class="vb"><svg class="ic"><use href="#i-do4"/></svg></b><i class="hsep"></i><b class="vb"><svg class="ic"><use href="#i-txtf"/></svg></b><b class="vb"><svg class="ic"><use href="#i-dimf"/></svg></b>
</div>
</div>
</aside>
</main>
<div class="hscroll"><i class="sa lf"></i><i class="thumb h"></i><i class="sa rt"></i></div>

<section class="cmd">
<div class="cmd-side">
<i class="cmd-grip"></i>
<span class="cmd-x">✕</span>
<svg class="wrench" viewBox="0 0 16 16"><path d="M2 3l3 3 2-1 1-2-3-2c3-1 6 1 5 4l5 6c1 2-1 3-2 2L7 8C4 9 1 7 2 3z"/></svg>
</div>
<div class="cmd-main">
<div class="hist"><div>命令:</div><div>命令:</div></div>
<div class="input"><span class="prompt">&gt;_</span><i class="arr gr"></i><span class="ph">键入命令</span></div>
</div>
</section>

<footer class="bottom">
<div class="ltabs">
<div class="ltab on">模型</div><div class="ltab">布局1</div><div class="ltab">布局2</div><div class="ltab plus">+</div>
</div>
<div class="status">
<span class="st-model">模型</span>
<b class="st"><svg class="ic"><use href="#i-grid"/></svg></b><b class="st"><svg class="ic"><use href="#i-snap"/></svg></b><i class="arr st-a"></i>
<b class="st"><svg class="ic"><use href="#i-dyn"/></svg></b><b class="st mg"><svg class="ic"><use href="#i-ort"/></svg></b><b class="st"><svg class="ic"><use href="#i-pol"/></svg></b><i class="arr st-a"></i>
<b class="st"><svg class="ic"><use href="#i-iso"/></svg></b><i class="arr st-a"></i><b class="st"><svg class="ic"><use href="#i-ang"/></svg></b><b class="st"><svg class="ic"><use href="#i-osnap"/></svg></b><i class="arr st-a"></i>
<b class="st"><svg class="ic"><use href="#i-an1"/></svg></b><b class="st"><svg class="ic"><use href="#i-an2"/></svg></b><b class="st"><svg class="ic"><use href="#i-an3"/></svg></b>
<span class="st-scale">1:1</span><i class="arr st-a nar"></i>
<b class="st"><svg class="ic"><use href="#i-cog"/></svg></b><i class="arr st-a"></i><b class="st"><svg class="ic"><use href="#i-plus"/></svg></b><b class="st mg"><svg class="ic"><use href="#i-iso2"/></svg></b><b class="st mg"><svg class="ic"><use href="#i-hw"/></svg></b><b class="st mg"><svg class="ic"><use href="#i-iso3"/></svg></b><b class="st"><svg class="ic"><use href="#i-full"/></svg></b><b class="st"><svg class="ic"><use href="#i-menu"/></svg></b>
</div>
</footer>
</div>

<div class="logo-a"><svg viewBox="0 0 30 24" width="30" height="24"><path class="a-red" d="M3 24L12 2h6l9 22h-6l-1-4h-3l-2-12-3 9-2 7z"/><path class="a-tri" d="M29 6h6l-3 4z"/></svg></div>
<div class="meter"></div>
<div class="wm wm1">知末网 www.znzmo.com</div>
<div class="wm wm2">知末网 www.znzmo.com</div>
<div class="wm wm3">知末网 www.znzmo.com</div>
<div class="wm wm4">知末网 www.znzmo.com</div>
<div class="wm wm5">知末网 www.znzmo.com</div>
<div class="wm wm6">知末网 www.znzmo.com</div>
<div class="wm wm7">知末网 www.znzmo.com</div>
<div class="brand">知末</div>
<div class="brand-id">ID: 277976981</div>
</body>
</html>
```
FILE: styles.css
```css
*{box-sizing:border-box}
html,body{margin:0;padding:0;width:1600px;height:853px;overflow:hidden;background:#f0f0f0;font-family:"Liberation Sans","Noto Sans CJK SC",sans-serif}
.defs{position:absolute}
i,b{display:block;font-style:normal;flex:none}
.app{position:relative;width:1600px;height:853px;display:flex;flex-direction:column}

.topstrip{height:7px;display:flex;background:#444}
.qa{margin-left:35px;width:197px;background:#e9e9e9;display:flex;gap:22px;padding-left:10px}
.qa-b{width:13px;height:4px;border:1px solid #555;border-top:none}
.photo{width:902px;background:linear-gradient(90deg,#2a2a3c 0,#5a3a60 4%,#1e5a80 12%,#2a7a9c 40%,#3a98b8 60%,#3a7d9c 80%,#4a8aa8 100%)}
.whitebox{width:149px;background:#fff;border:1px solid #555;border-top:none}
.graybox{width:212px;background:#e0e0e0;border-bottom:1px solid #777}
.photo2{flex:1;background:linear-gradient(90deg,#1f5f8f,#4a7ea0)}

.menubar{height:17px;padding-left:46px;display:flex;align-items:center;background:linear-gradient(#4e4e4e,#6a6a6a 50%,#7c7c7c);position:relative}
.mi{color:#e2e2e2;font-size:10px;white-space:nowrap;text-shadow:0 0 1px #222}
.mi+.mi{margin-left:20.6px}
.winctl{margin-left:auto;margin-right:3px;display:flex;align-items:center;gap:6px;height:17px}
.wc-min{width:8px;height:2px;background:#111;margin-top:7px}
.wc-max{width:10px;height:9px;border:1.500px solid #222;border-top-width:2px;background:transparent}
.wc-x{color:#111;font-size:10px;font-weight:bold;line-height:1}

.tabbar{height:21px;background:#b1b1b1;border-top:1px solid #6f6f6f;display:flex;align-items:flex-end;padding-left:18px}
.ftab{width:102px;height:19px;border-radius:8px 10px 0 0;background:#c6c6c6;color:#777;font-size:11px;line-height:19px;padding-left:9px}
.ftab.active{width:108px;background:#f0f0f0;color:#111;display:flex;justify-content:space-between;padding:0 12px 0 8px;margin-left:2px;font-size:10.500px}
.tabx{color:#999;font-size:9px}
.fplus{width:18px;height:13px;margin:0 0 1px 1px;background:#cfcfcf;border-radius:3px 5px 0 0;text-align:center;font-size:13px;line-height:12px;font-weight:bold;color:#444}

.toolbars{height:49px;background:#f0f0f0;border-bottom:1px solid #d8d8d8;padding-top:3px}
.row{display:flex;align-items:center;padding-left:1px}
.r1{height:22px}
.r2{height:23px;padding-left:8px}
.btn{width:19.200px;height:20px;display:flex;align-items:center;justify-content:center}
.btn.nar{width:13px}
.ic{width:16px;height:16px;fill:none;stroke:#4b4b4b;stroke-width:1;overflow:visible}
.ic.sm{width:14px;height:14px;margin-right:3px}
.sep{width:5.700px;height:18px;position:relative}
.sep::after{content:"";position:absolute;left:2.500px;top:0;width:1px;height:18px;background:#9a9a9a}
.grip{width:6px;height:20px;background:repeating-linear-gradient(#8f8f8f 0 1px,#e6e6e6 1px 2px);border-left:1px solid #bbb;border-right:1px solid #bbb}
.grip.gl2{margin-left:8px;margin-right:1px}
.grip.g3{margin-left:2px;margin-right:2px}
.arr{width:0;height:0;border-left:3.500px solid transparent;border-right:3.500px solid transparent;border-top:4px solid #555;margin:0 2px}
.arr.lt{border-top-color:#bbb;margin-left:auto;margin-right:3px}
.r1 .arr.lt{margin:0 2px}
.arr.dk{border-top-color:#111;margin-left:auto;margin-right:3px}
.dd{height:20px;background:linear-gradient(#fafafa,#f0f0f0 45%,#d4d4d4);border:1px solid #bdbdbd;border-radius:2px;display:flex;align-items:center;font-size:11px;color:#222;padding-left:4px}
.dd-t{white-space:nowrap;letter-spacing:.3px}
.dd-t.c{margin-left:auto;margin-right:auto}
.w-fs{width:99px}.w-fs .dd-t{transform:translateX(4px)}
.w-dim{width:99px}.w-std{width:99px}.w-std2{width:98px}
.w-ws{width:146px;height:21px}
.w-layer{width:249px;padding-left:5px;margin-right:4px;height:21px}
.w-col{width:123px;height:21px;padding-left:3px}
.w-lt{width:133px;height:21px}
.w-lw{width:104px;height:21px}
.w-pc{width:101px;height:21px}
.nr{width:5px;background:none;border-left:none;border-right:1px solid #bbb}
.off{background:#f4f4f4;border-color:#ccc}
.swatch{width:9px;height:9px;border:1px solid #111;background:#fff;margin-right:3px}
.swatch.cyan{width:10px;height:10px;background:#00dada;margin-right:2px}
.ln,.zh{font-size:11px}
.ltline{width:50px;height:1px;background:#222;margin:0 4px 0 2px}
.ltline.sh{width:34px}
.mono{font-family:"Liberation Mono",monospace;font-size:9px;font-weight:bold;letter-spacing:0}
.gray{color:#999;font-weight:normal}

.work{height:672px;display:flex}
.ltool{width:24px;background:#f0f0f0}
.lbar{width:20px;margin-left:2px;height:377px;border:1px solid #8a8a8a;border-top:none;background:#f0f0f0}
.vgrip{height:7px;background:repeating-linear-gradient(90deg,#8f8f8f 0 1px,#c0c0c0 1px 2px);border-bottom:1px solid #aaa}
.vb{height:18.500px;display:flex;align-items:center;justify-content:center}
.a-glyph{font-size:17px;font-weight:normal;color:#222;line-height:18px}
.view{position:relative;width:1533px;height:672px;background:#212830;overflow:hidden}
.draw{display:block;background:#212830}
.vplabel{position:absolute;left:3px;top:4px;color:#d6d6d6;font-size:10.500px;white-space:nowrap}
.frame{fill:none;stroke:#4f555b;stroke-width:1}
.bl{fill:none;stroke:#0000e0;stroke-width:1.400}
.cy{fill:none;stroke:#00b4b4;stroke-width:1.500}
.cy.wide{stroke-width:1.800}
.cf{fill:#00d8d8}
.cc{fill:none;stroke:#00b8b8;stroke-width:1.300}
.rd{fill:none;stroke:#f00}
.dr{fill:none;stroke:#a81212;stroke-width:1.500}
.dots{fill:none;stroke:#e81010;stroke-width:2.400;stroke-dasharray:1.800 1.300}
.ha{fill:#6e6e6e}
.tl{fill:#1c8c8c}
.gl{fill:none;stroke:#808080;stroke-width:.8}
.gl2{fill:none;stroke:#6c6c6c;stroke-width:1.500}
.dk{fill:none;stroke:#a81212;stroke-width:3}
.bxr{fill:none;stroke:#c01010;stroke-width:1.400}
.wh{fill:none;stroke:#ddd;stroke-width:1.300}
.bg{fill:none;stroke:#1818c0;stroke-width:.9}
.ucs{fill:none;stroke:#d4d4d4;stroke-width:1}
.ring{fill:none;stroke:rgba(255,255,255,.2);stroke-width:11}
.face{fill:#b5b8bb}
.facein{fill:#9da2a6}
.top{font-size:22px;fill:#6c7278;text-anchor:middle;font-family:"Noto Sans CJK SC",sans-serif}
.dir{font-size:15px;fill:#a6a8aa;text-anchor:middle;font-family:"Noto Sans CJK SC",sans-serif}
.wcs{fill:#7e8388;stroke:#8e9398}
.wcst{font-size:8.500px;fill:#3f444a;text-anchor:middle}
.wcsa{fill:#9da0a4}

.rside{flex:1;display:flex;background:#f0f0f0}
.vscroll{width:16px;position:relative;background:#f3f3f3;border-right:1px solid #e2e2e2}
.sa{position:absolute;width:0;height:0;border:3px solid transparent}
.sa.up{left:4px;top:5px;border-bottom:4px solid #333;border-top:none}
.sa.dn{left:4px;bottom:6px;border-top:4px solid #333;border-bottom:none}
.thumb{position:absolute;left:1px;top:15px;width:12px;height:13px;border:1px solid #c4c4c4;background:linear-gradient(90deg,#fff,#dedede);border-radius:2px}
.rtool{width:27px;padding-left:2px}
.rbar{width:21px;border:1px solid #8a8a8a;border-top:none;background:#f0f0f0;height:339px}
.rbar.second{height:123px;border-top:1px solid #8a8a8a}
.rbar .vb{height:18.200px}
.hsep{height:1px;margin:2px 2px 3px;background:#aaa}
.hscroll{height:16px;position:relative;background:#f0f0f0;border-bottom:1px solid #888}
.sa.lf{left:28px;top:4px;border-right:4px solid #333;border-left:none}
.sa.rt{left:1547px;top:4px;border-left:4px solid #333;border-right:none}
.thumb.h{left:39px;top:1px;width:13px;height:14px;background:linear-gradient(#fff,#d8d8d8)}

.cmd{height:47px;display:flex;border-bottom:1px solid #888}
.cmd-side{width:19px;background:linear-gradient(#6b6b6b,#3e3e3e);display:flex;flex-direction:column;align-items:center}
.cmd-grip{width:15px;height:5px;margin:4px 0 3px;background:repeating-linear-gradient(90deg,#aaa 0 1px,transparent 1px 2px)}
.cmd-x{color:#eee;font-size:10px;font-weight:bold;line-height:14px;margin-top:1px}
.wrench{width:13px;height:13px;margin-top:8px;fill:#eee}
.cmd-main{flex:1;display:flex;flex-direction:column}
.hist{height:27px;background:#c6c6c6;border-bottom:1px solid #8a8a8a;font-size:11px;line-height:13px;padding:1px 0 0 2px;color:#111;font-weight:bold;text-shadow:0 0 2px #fff;overflow:hidden}
.input{flex:1;background:#fff;display:flex;align-items:center;padding-left:4px}
.prompt{width:12px;height:11px;border:1px solid #b8c4d4;background:#dfe5ee;font-size:7px;line-height:10px;color:#333;font-family:"Liberation Mono",monospace;border-radius:1px;text-align:center}
.arr.gr{border-top-color:#777;margin:0 4px}
.ph{color:#aaa;font-size:11px;margin-left:1px}

.bottom{flex:1;display:flex;background:#b1b1b1;position:relative}
.ltabs{display:flex;padding-left:10px;width:1097px}
.ltab{height:16px;width:42px;margin-right:2px;background:#c6c6c6;color:#666;font-size:11px;line-height:17px;text-align:center;border-radius:0 0 7px 7px}
.ltab.on{width:38px;background:#f0f0f0;color:#111;font-weight:bold}
.ltab.plus{width:18px;margin-left:4px;font-weight:bold;font-size:13px;background:#d0d0d0;color:#444}
.status{flex:1;background:#ececec;display:flex;align-items:center;padding-left:1px}
.st-model{width:25px;font-size:11px;font-weight:bold;color:#111;text-align:center;margin:0 1px;white-space:nowrap}
.st{width:19.500px;height:20px;display:flex;align-items:center;justify-content:center}
.st.mg{margin-left:2px}
.st .ic{width:14px;height:14px}
.st-a{margin:0 3.500px;border-top-color:#222}
.st-a.nar{margin:0 2px}
.st-scale{width:20px;font-size:11px;color:#111;text-align:center;margin-left:2px}

.logo-a{position:absolute;left:0;top:0;width:35px;height:25px;background:linear-gradient(#8a8a8a,#5a5a5a)}
.a-red{fill:#bb2020}
.a-tri{fill:#222}
.logo-a svg{overflow:visible}
.meter{position:absolute;left:2px;top:78px;width:6px;height:41px;border-radius:3px;background:linear-gradient(#1a1a1a 0,#1a1a1a 55%,#2f8a48 58%,#2c9a4a 100%)}
.wm{position:absolute;white-space:nowrap;font-family:"Noto Sans CJK SC",sans-serif;font-size:33px;font-weight:700;color:rgba(255,255,255,.09);transform:translate(-50%,-50%) rotate(-45deg);pointer-events:none}
.wm1{left:158px;top:243px}
.wm2{left:694px;top:240px}
.wm3{left:1245px;top:245px}
.wm4{left:0;top:610px}
.wm5{left:541px;top:614px}
.wm6{left:1094px;top:614px}
.wm7{left:1642px;top:618px}
.brand{position:absolute;left:1406px;top:712px;font-family:"Noto Sans CJK SC",sans-serif;font-size:62px;line-height:76px;letter-spacing:2px;font-weight:500;color:rgba(255,255,255,.82)}
.brand-id{position:absolute;left:1362px;top:796px;font-family:"Liberation Sans",sans-serif;font-size:33.500px;line-height:36px;letter-spacing:-1.150px;color:rgba(255,255,255,.55);-webkit-text-stroke:1px #a8a8a8;white-space:nowrap}
```
